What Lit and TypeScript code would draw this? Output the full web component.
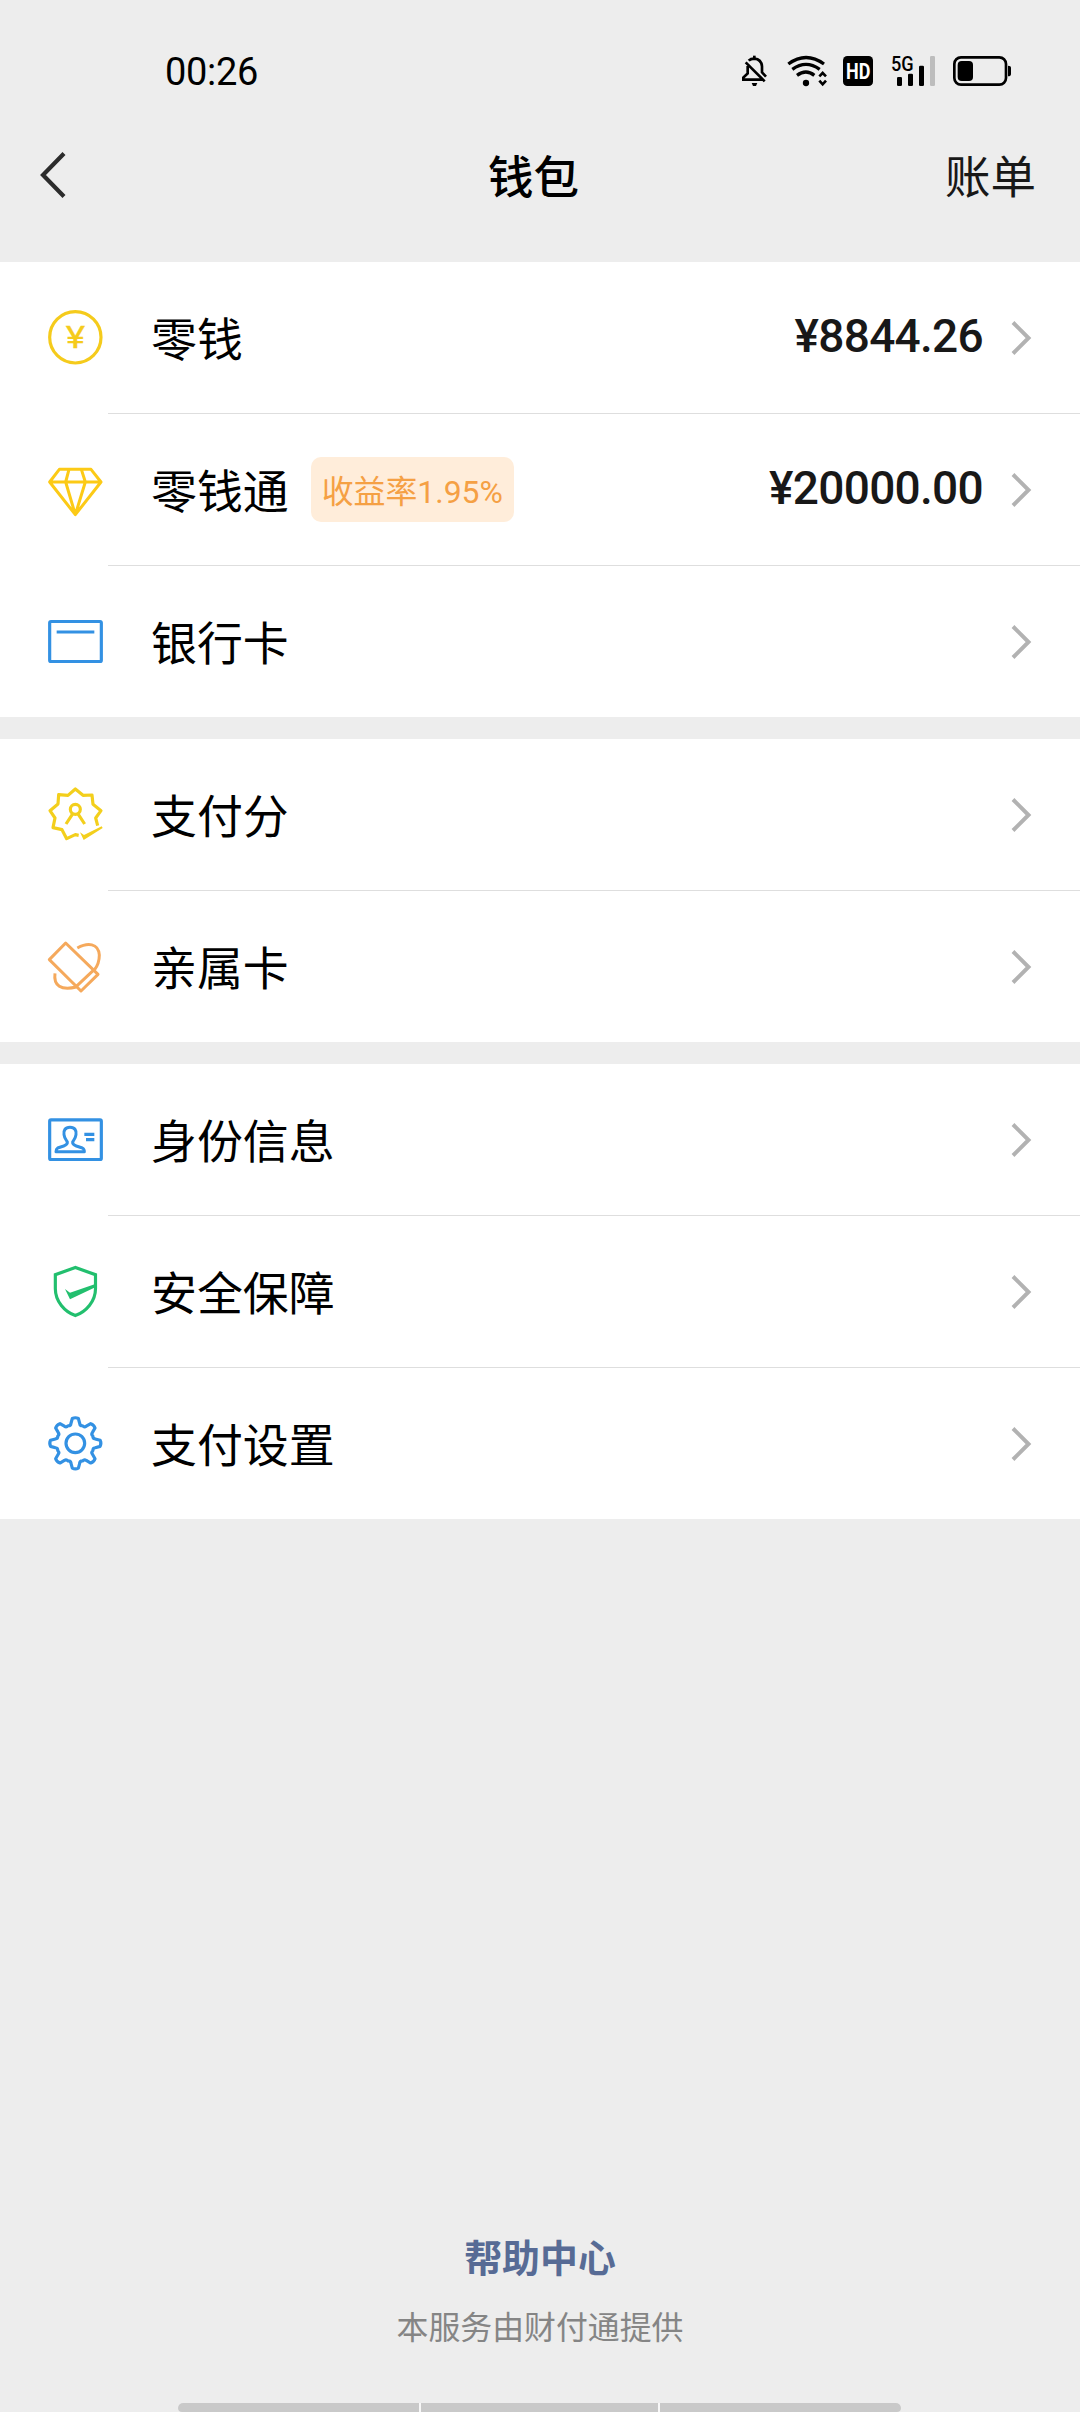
import { LitElement, html, svg, css, nothing } from "lit";
import type { SVGTemplateResult } from "lit";
import { customElement, property } from "lit/decorators.js";

const FONT = css`Roboto, "Noto Sans CJK SC", sans-serif`;

const YELLOW = "#f5cb1c";
const BLUE = "#3391e3";
const ORANGE = "#f5a95c";
const GREEN = "#22bf6e";

/** Outline of an eight-toothed gear centred on (cx, cy). */
function gearPath(cx: number, cy: number): string {
  const at = (deg: number, r: number) => {
    const a = ((deg - 90) * Math.PI) / 180;
    return `${(cx + r * Math.cos(a)).toFixed(1)} ${(cy + r * Math.sin(a)).toFixed(1)}`;
  };
  let d = "";
  for (let i = 0; i < 8; i++) {
    const t = i * 45;
    d += `${i ? "L" : "M"}${at(t - 7, 75)}Q${at(t, 79)} ${at(t + 7, 75)}L${at(t + 12.5, 61)}Q${at(t + 15, 54)} ${at(t + 22.5, 57)}Q${at(t + 30, 54)} ${at(t + 32.5, 61)}`;
  }
  return d + "Z";
}

const ICONS: Record<string, SVGTemplateResult> = {
  coin: svg`<g stroke=${YELLOW} stroke-width="9.500">
    <circle cx="91" cy="88" r="77"/>
    <text x="62" y="121" textLength="58" lengthAdjust="spacingAndGlyphs" font-family="Roboto, sans-serif" font-weight="400" font-size="92" fill=${YELLOW} stroke-width="1">¥</text></g>`,
  diamond: svg`<path stroke="#fcca16" stroke-width="9" stroke-linejoin="round" d="M43 28H138L168 66L91 164L14 66ZM14 66H168M72 28L62 66L91 164L121 66L109 28"/>`,
  card: svg`<g stroke=${BLUE} stroke-width="9.500"><rect x="14" y="28.500" width="155" height="120" rx="4"/><path d="M35 60H148"/></g>`,
  score: svg`<g stroke="#f3cf1c" stroke-width="9.500" stroke-linejoin="round">
    <path d="M158 122L152 99L168 77L144 58L141 30L114 31L91 12L69 31L41 29L39 57L15 77L30 99L24 128L51 134L65 161L91 149L101 151"/>
    <circle cx="91" cy="73" r="15"/><path d="M82 88L63 117M100 88L119 117"/>
    <path d="M105 142L117 150L170 124L173 129L116 165Z" fill="#f3cf1c" stroke="none"/></g>`,
  family: svg`<g stroke=${ORANGE} stroke-width="9" stroke-linejoin="round">
    <path d="M62 18L13 68L108 162L159 112ZM94 148L145 100"/>
    <path d="M97 33C128 16 160 18 163 54C163 75 156 89 148 99"/>
    <path d="M30 109C25 146 48 161 94 150"/></g>`,
  identity: svg`<g stroke=${BLUE} stroke-width="9.500"><rect x="14" y="29.500" width="155" height="119" rx="4"/>
    <path stroke-width="9" stroke-linejoin="round" d="M75 52C60 52 55 62 57 74C58 84 64 90 67 96C68 102 64 105 56 108L38 114Q33 117 33 125H118Q118 117 112 114L94 108C86 105 82 102 83 96C86 90 92 84 93 74C95 62 90 52 75 52Z"/>
    <path d="M118 73H148M123 89H148"/></g>`,
  shield: svg`<g stroke=${GREEN} stroke-width="9.500"><path d="M91 16.500L31 38V80C31 118 59 149 91 160.500C123 149 151.500 118 151.500 80V38Z"/>
    <path fill=${GREEN} stroke="none" d="M60 81L75 92L151 66V76L75 112Z"/></g>`,
  gear: svg`<g stroke=${BLUE} stroke-width="9.500" stroke-linejoin="round"><path d=${gearPath(91, 88)}/><circle cx="91" cy="88" r="28"/></g>`,
};

interface Entry {
  icon: string;
  label: string;
  tag?: string;
  amount?: string;
}

const GROUPS: Entry[][] = [
  [
    { icon: "coin", label: "零钱", amount: "¥8844.26" },
    { icon: "diamond", label: "零钱通", tag: "收益率1.95%", amount: "¥20000.00" },
    { icon: "card", label: "银行卡" },
  ],
  [
    { icon: "score", label: "支付分" },
    { icon: "family", label: "亲属卡" },
  ],
  [
    { icon: "identity", label: "身份信息" },
    { icon: "shield", label: "安全保障" },
    { icon: "gear", label: "支付设置" },
  ],
];

@customElement("status-bar")
export class StatusBar extends LitElement {
  static styles = css`
    :host {
      display: flex;
      align-items: center;
      justify-content: space-between;
      height: 142px;
      padding: 0 68px 0 165px;
      box-sizing: border-box;
      font-family: ${FONT};
      color: #000;
    }
    .time {
      margin-top: 1px;
      font-size: 38px;
      line-height: 44px;
      letter-spacing: -0.3px;
    }
    .icons {
      display: flex;
      align-items: center;
    }
    svg {
      display: block;
      height: 30px;
      overflow: visible;
    }
    .bell { width: 27px; margin-right: 19px; }
    .wifi { width: 41px; margin-right: 15px; }
    .hd { width: 30px; margin-right: 18px; }
    .signal { width: 45px; margin-right: 17px; }
    .battery { width: 59px; }
  `;

  render() {
    return html`
      <span class="time">00:26</span>
      <div class="icons">
        <svg class="bell" viewBox="63 48 81 90" fill="none" stroke="#000" stroke-width="8">
          <path d="M86 62Q92 56 103 56Q124 58 126 79V97L138 110M83 78V100L70 113V119H128M77 67L134 124"/>
          <path d="M103 47V56" />
          <path d="M95 129H112L108 138H99Z" fill="#000" stroke="none"/>
        </svg>
        <svg class="wifi" viewBox="201 48 123 90" fill="none" stroke="#000" stroke-width="10">
          <path d="M205 72Q258 33 312 72M217 88Q258 58 299 88M231 106Q258 86 283 106"/>
          <circle cx="258" cy="129" r="9.500" fill="#000" stroke="none"/>
          <path stroke-width="8" d="M298 109L308 99L318 109M298 122L308 133L318 122"/>
        </svg>
        <svg class="hd" viewBox="369 48 90 90">
          <rect x="369" y="48" width="90" height="90" rx="13"/>
          <text x="378" y="117" fill="#fff" font-family="Roboto, sans-serif" font-weight="700" font-size="66" textLength="73" lengthAdjust="spacingAndGlyphs">HD</text>
        </svg>
        <svg class="signal" viewBox="513 48 135 90">
          <text x="513" y="93" font-family="Roboto, sans-serif" font-weight="500" font-size="59" textLength="68" lengthAdjust="spacingAndGlyphs">5G</text>
          <rect x="531" y="111" width="15" height="27" rx="4"/>
          <rect x="564" y="101" width="15" height="37" rx="4"/>
          <rect x="597" y="77" width="15" height="61" rx="4"/>
          <rect x="630" y="48" width="15" height="90" rx="4" fill="#bdbdbd"/>
        </svg>
        <svg class="battery" viewBox="699 48 177 90">
          <rect x="703" y="52" width="155" height="82" rx="20" fill="none" stroke="#000" stroke-width="8"/>
          <rect x="713" y="63" width="46" height="60" rx="12"/>
          <path d="M864 77Q873 77 873 84V102Q873 109 864 109Z"/>
        </svg>
      </div>
    `;
  }
}

@customElement("nav-bar")
export class NavBar extends LitElement {
  static styles = css`
    :host {
      display: grid;
      grid-template-columns: 1fr auto 1fr;
      align-items: center;
      height: 66px;
      padding: 0 44px 0 39px;
      font-family: ${FONT};
      font-size: 45.5px;
      line-height: 56px;
    }
    .back {
      display: block;
      width: 30px;
      height: 48px;
    }
    .title {
      margin: 8px 8px 0 0;
      font-weight: 500;
      color: #000;
    }
    .action {
      margin-top: 8px;
      justify-self: end;
      color: #181818;
    }
  `;

  render() {
    return html`
      <svg class="back" viewBox="0 0 30 48" fill="none" stroke="#2c2c2c" stroke-width="4.200">
        <path d="M25 2.500L4 24L25 45.500"/>
      </svg>
      <span class="title">钱包</span>
      <span class="action">账单</span>
    `;
  }
}

@customElement("wallet-row")
export class WalletRow extends LitElement {
  @property({ attribute: false }) entry!: Entry;

  static styles = css`
    :host {
      display: block;
      height: 152px;
      font-family: ${FONT};
    }
    :host(:last-child) {
      height: 151px;
    }
    .row {
      display: flex;
      align-items: center;
      height: 152px;
      padding: 0 48px 0 45px;
      box-sizing: border-box;
    }
    .icon {
      width: 60px;
      height: 60px;
      margin-right: 46px;
      overflow: visible;
    }
    .label {
      margin-top: 3px;
      font-size: 45.9px;
      line-height: 66px;
      color: #000;
    }
    .tag {
      margin: -1px 0 0 22px;
      padding: 0 11px 0 11px;
      height: 65px;
      border-radius: 10px;
      background: #ffedda;
      color: #f5a044;
      font-size: 31.900px;
      line-height: 70px;
    }
    .amount {
      margin: 0 28px 4px auto;
      font-size: 46px;
      font-weight: 500;
      line-height: 54px;
      letter-spacing: -0.7px;
      color: #181818;
    }
    .chevron {
      width: 21px;
      height: 36px;
      flex: none;
    }
    .chevron.alone {
      margin-left: auto;
    }
  `;

  render() {
    const { icon, label, tag, amount } = this.entry;
    return html`
      <div class="row">
        <svg class="icon" viewBox="0 0 180 180" fill="none">${ICONS[icon]}</svg>
        <span class="label">${label}</span>
        ${tag ? html`<span class="tag">${tag}</span>` : nothing}
        ${amount ? html`<span class="amount">${amount}</span>` : nothing}
        <svg class="chevron ${amount ? "" : "alone"}" viewBox="0 0 21 36" fill="none" stroke="#b2b2b2" stroke-width="4">
          <path d="M2 2.500L17.500 18L2 33.500"/>
        </svg>
      </div>
    `;
  }
}

@customElement("app-root")
export class AppRoot extends LitElement {
  static styles = css`
    :host {
      display: flex;
      flex-direction: column;
      width: 1080px;
      height: 2412px;
      overflow: hidden;
      background: #ededed;
      font-family: ${FONT};
    }
    .header {
      height: 262px;
    }
    .groups {
      display: flex;
      flex-direction: column;
      gap: 22px;
    }
    .group {
      background: #fff;
    }
    .divider {
      height: 1px;
      margin: -1px 0 0 108px;
      background: #dedede;
    }
    .footer {
      margin-top: auto;
      display: flex;
      flex-direction: column;
      align-items: center;
    }
    .help {
      font-size: 37.900px;
      font-weight: 700;
      line-height: 56px;
      color: #576b95;
    }
    .provider {
      margin-top: 17px;
      font-size: 31.900px;
      line-height: 48px;
      color: #858585;
    }
    .handles {
      display: flex;
      gap: 2px;
      width: 723px;
      height: 9px;
      margin: 51px 1px 0 0;
      border-radius: 5px 5px 4px 4px;
      overflow: hidden;
      background: #f8f8f8;
    }
    .handle {
      flex: 1;
      background: #c9c9c9;
    }
    .handle.center {
      flex: 0 0 237px;
    }
  `;

  render() {
    return html`
      <div class="header">
        <status-bar></status-bar>
        <nav-bar></nav-bar>
      </div>
      <div class="groups">
        ${GROUPS.map(
          (group) => html`<div class="group">
            ${group.map(
              (entry, i) => html`${i ? html`<div class="divider"></div>` : nothing}<wallet-row .entry=${entry}></wallet-row>`
            )}
          </div>`
        )}
      </div>
      <div class="footer">
        <span class="help">帮助中心</span>
        <span class="provider">本服务由财付通提供</span>
        <div class="handles">
          <div class="handle"></div>
          <div class="handle center"></div>
          <div class="handle"></div>
        </div>
      </div>
    `;
  }
}
